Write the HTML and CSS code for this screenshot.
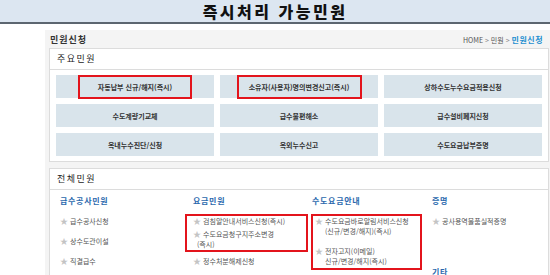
FILE: index.html
```html
<!DOCTYPE html>
<html lang="ko">
<head>
  <meta charset="UTF-8">
  <meta name="viewport" content="width=device-width, initial-scale=1.0">
  <title>즉시처리 가능민원</title>
  <link rel="stylesheet" href="styles.css">
</head>
<body>
  <div class="top-bar">
    <h1 class="top-title">즉시처리 가능민원</h1>
  </div>
  <div class="panel">
    <div class="panel-head">
      <h2 class="panel-title">민원신청</h2>
      <div class="crumbs">HOME <span class="crumb-sep">&gt;</span> 민원 <span class="crumb-sep">&gt;</span> <strong class="crumb-now">민원신청</strong></div>
    </div>

    <section class="box">
      <h3 class="box-title">주요민원</h3>
      <div class="quick-grid">
        <a class="quick-btn"><span class="mark mark-a">자동납부 신규/해지(즉시)</span></a>
        <a class="quick-btn"><span class="mark mark-b">소유자(사용자)명의변경신고(즉시)</span></a>
        <a class="quick-btn">상하수도누수요금적용신청</a>
        <a class="quick-btn">수도계량기교체</a>
        <a class="quick-btn">급수불편해소</a>
        <a class="quick-btn">급수설비폐지신청</a>
        <a class="quick-btn">옥내누수진단/신청</a>
        <a class="quick-btn">옥외누수신고</a>
        <a class="quick-btn">수도요금납부증명</a>
      </div>
    </section>

    <section class="box">
      <h3 class="box-title">전체민원</h3>
      <div class="all-grid">
        <div class="col">
          <h4 class="col-title">급수공사민원</h4>
          <ul class="items">
            <li><span>급수공사신청</span></li>
            <li><span>상수도관이설</span></li>
            <li><span>직결급수</span></li>
          </ul>
        </div>
        <div class="col">
          <h4 class="col-title">요금민원</h4>
          <ul class="items pick pick-tight">
            <li><span>검침알안내서비스신청(즉시)</span></li>
            <li><span>수도요금청구지주소변경<br><span class="wrap-line">(즉시)</span></span></li>
          </ul>
          <ul class="items items-after">
            <li><span>정수처분해제신청</span></li>
          </ul>
        </div>
        <div class="col">
          <h4 class="col-title">수도요금안내</h4>
          <ul class="items pick pick-wide">
            <li><span>수도요금바로알림서비스신청<br>(신규/변경/해지)(즉시)</span></li>
            <li><span>전자고지(이메일)<br>신규/변경/해지(즉시)</span></li>
          </ul>
        </div>
        <div class="col">
          <h4 class="col-title">증명</h4>
          <ul class="items">
            <li><span>공사용역물품실적증명</span></li>
          </ul>
          <h4 class="col-title col-title-next">기타</h4>
        </div>
      </div>
    </section>
  </div>
</body>
</html>
```

FILE: styles.css
```css
html, body {
  overflow: hidden;
}
body {
  margin: 0;
  font-family: "Noto Sans CJK KR", "Liberation Sans", sans-serif;
  color: #333;
  background-color: #fff;
}
h1, h2, h3, h4, ul {
  margin: 0;
  padding: 0;
}
.top-bar {
  height: 22px;
  background-color: #dce6f1;
  border-bottom: 2px solid #5c6670;
}
.top-title {
  text-align: center;
  font-size: 16px;
  line-height: 22px;
  font-weight: 900;
  letter-spacing: 2.5px;
  color: #111;
}
.panel {
  margin: 6px 0 0 45px;
  width: 500px;
  padding: 0 4px 300px 4px;
  background-color: #f4f4f4;
}
.panel-head {
  display: flex;
  align-items: center;
  height: 18px;
}
.panel-title {
  font-size: 9px;
  font-weight: 700;
  letter-spacing: 1px;
  padding-left: 1px;
  color: #333;
}
.crumbs {
  margin-left: auto;
  margin-right: 6px;
  font-size: 7px;
  color: #555;
  white-space: nowrap;
}
.crumb-sep {
  color: #888;
}
.crumb-now {
  font-size: 8px;
  color: #1e8fd0;
  letter-spacing: 0.5px;
}
.box {
  background-color: #fff;
  border: 1px solid #dcdcdc;
  margin-bottom: 6px;
}
.box-title {
  height: 20px;
  line-height: 20px;
  padding-left: 7px;
  font-size: 9px;
  font-weight: 400;
  letter-spacing: 1.5px;
  color: #222;
  border-bottom: 1px solid #dcdcdc;
}
.quick-grid {
  display: grid;
  grid-template-columns: repeat(3, 1fr);
  gap: 6px;
  padding: 5px 6px;
}
.quick-btn {
  display: flex;
  align-items: center;
  justify-content: center;
  height: 23px;
  background-color: #d9e4eb;
  font-size: 7px;
  font-weight: 700;
  color: #333;
}
.mark {
  display: flex;
  align-items: center;
  justify-content: center;
  box-sizing: border-box;
  height: 24px;
  margin-top: 1px;
  border: 2px solid #e3141c;
}
.mark-a {
  width: 114px;
}
.mark-b {
  width: 125px;
}
.all-grid {
  display: grid;
  grid-template-columns: 133px 119px 120px 1fr;
  padding: 5px 0 0 10px;
}
.col-title {
  font-size: 8px;
  line-height: 12px;
  font-weight: 700;
  letter-spacing: 0.7px;
  color: #2a68ad;
  margin-bottom: 7px;
}
.col-title-next {
  margin-top: 40px;
}
.items {
  list-style: none;
  padding-top: 2px;
}
.items li {
  display: flex;
  font-size: 7px;
  line-height: 10px;
  color: #555;
  margin-bottom: 10px;
}
.items li::before {
  content: "★";
  flex: 0 0 10px;
  color: #c4c4c4;
  font-size: 8px;
}
.pick {
  border: 2px solid #e3141c;
  padding-top: 0;
}
.pick li:last-child {
  margin-bottom: 0;
}
.pick-tight {
  width: 113px;
  margin-left: -8px;
  padding: 0 0 1px 6px;
  margin-bottom: 4px;
}
.pick-tight li {
  margin-bottom: 3px;
}
.pick-wide {
  width: 105px;
  margin-left: -1px;
  padding: 0 0 2px 2px;
}
.items-after {
  padding-top: 0;
}
.wrap-line {
  margin-left: -6px;
}
```
